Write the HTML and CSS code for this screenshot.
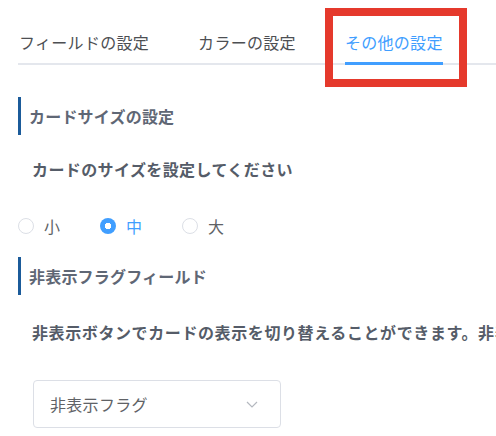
FILE: index.html
```html
<!DOCTYPE html>
<html lang="ja">
<head>
    <meta charset="UTF-8">
    <meta name="viewport" content="width=device-width, initial-scale=1.0">
    <title>その他の設定</title>
    <link rel="stylesheet" href="styles.css">
</head>
<body>
    <!-- Settings tabs -->
    <ul class="tabs">
        <li class="tab">フィールドの設定</li>
        <li class="tab">カラーの設定</li>
        <li class="tab active">その他の設定</li>
    </ul>
    <div class="highlight"></div>

    <!-- Card size -->
    <h2 class="section-title">カードサイズの設定</h2>
    <p class="section-desc">カードのサイズを設定してください</p>
    <div class="radio-group">
        <label class="radio">
            <span class="radio-circle"></span>
            <span class="radio-label">小</span>
        </label>
        <label class="radio checked">
            <span class="radio-circle"></span>
            <span class="radio-label">中</span>
        </label>
        <label class="radio">
            <span class="radio-circle"></span>
            <span class="radio-label">大</span>
        </label>
    </div>

    <!-- Hidden flag field -->
    <h2 class="section-title second">非表示フラグフィールド</h2>
    <p class="section-desc wide">非表示ボタンでカードの表示を切り替えることができます。非表示フラグとして使うフィールドを選択してください。</p>
    <div class="select">
        <span class="select-value">非表示フラグ</span>
        <svg class="select-arrow" width="12" height="7" viewBox="0 0 12 7">
            <path d="M1 1l5 5 5-5" fill="none" stroke="#b4b8bf" stroke-width="1.2"/>
        </svg>
    </div>
</body>
</html>
```

FILE: styles.css
```css
body {
    margin: 0;
    padding: 0 0 0 18px;
    background-color: #fff;
    font-family: "Noto Sans CJK JP", "Noto Sans", sans-serif;
    font-size: 16px;
    color: #4a4d52;
    overflow: hidden;
    position: relative;
}
.tabs {
    display: flex;
    gap: 49px;
    list-style: none;
    margin: 20px 0 0;
    padding: 0 0 0 1px;
    border-bottom: 2px solid #e4e7ed;
}
.tab {
    padding: 10px 0 8px;
    line-height: 24px;
    letter-spacing: 0.3px;
    color: #4d4f53;
    border-bottom: 3px solid transparent;
    margin-bottom: -2px;
}
.tab.active {
    color: #409eff;
    border-bottom-color: #409eff;
}
.highlight {
    position: absolute;
    left: 325px;
    top: 8px;
    width: 126px;
    height: 63px;
    border: 8px solid #e5392c;
}
.section-title {
    margin: 32px 0 0;
    height: 38px;
    line-height: 38px;
    padding-left: 8px;
    border-left: 3px solid #1b5b9a;
    font-size: 16px;
    font-weight: 700;
    letter-spacing: 0.2px;
    color: #5f6775;
}
.section-title.second {
    margin-top: 19px;
}
.section-desc {
    margin: 22px 0 0 14px;
    line-height: 24px;
    font-weight: 700;
    letter-spacing: 0.4px;
    color: #555c68;
    white-space: nowrap;
}
.section-desc.wide {
    margin-top: 25px;
    letter-spacing: 0.6px;
}
.radio-group {
    display: flex;
    gap: 40px;
    margin-top: 33px;
    line-height: 24px;
}
.radio {
    display: flex;
    align-items: center;
    gap: 10px;
    color: #606266;
}
.radio-circle {
    width: 14px;
    height: 14px;
    border: 1px solid #dcdfe6;
    border-radius: 50%;
    box-sizing: content-box;
}
.radio.checked {
    color: #409eff;
}
.radio.checked .radio-circle {
    width: 16px;
    height: 16px;
    border: none;
    background: radial-gradient(circle, #fff 0 3px, #409eff 3.5px);
}
.select {
    display: flex;
    align-items: center;
    justify-content: space-between;
    box-sizing: border-box;
    width: 248px;
    height: 48px;
    margin: 36px 0 0 15px;
    padding: 0 22px 0 16px;
    border: 1px solid #dcdfe6;
    border-radius: 4px;
}
.select-value {
    color: #606266;
    letter-spacing: 0.3px;
}
.select-arrow {
    display: block;
}
```
